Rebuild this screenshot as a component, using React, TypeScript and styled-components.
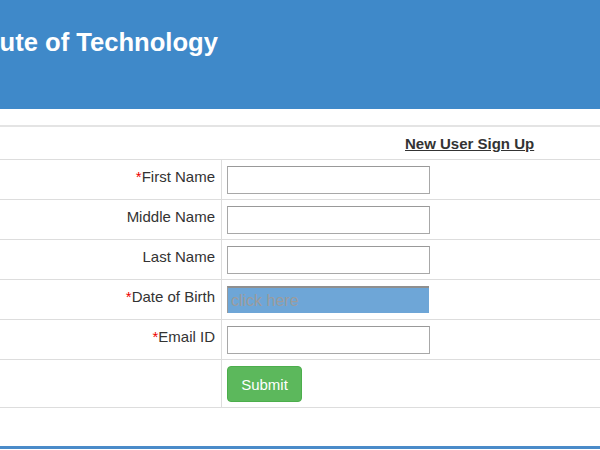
import styled, { createGlobalStyle } from "styled-components";

const GlobalStyle = createGlobalStyle`
  html, body {
    margin: 0;
    padding: 0;
    background: #fff;
    overflow: hidden;
  }
  body {
    font-family: "Liberation Sans", Arial, Helvetica, sans-serif;
    color: #333;
  }
`;

const Page = styled.div`
  width: 600px;
  height: 450px;
  overflow: hidden;
`;

const Banner = styled.header`
  height: 109px;
  background-color: #3f89c9;
  padding-top: 27px;
  box-sizing: border-box;
`;

const TitleBox = styled.div`
  width: 218px;
  display: flex;
  justify-content: flex-end;
  white-space: nowrap;
`;

const Title = styled.h1`
  margin: 0;
  font-size: 25.6px;
  line-height: 30px;
  font-weight: bold;
  color: #fff;
`;

const FormTable = styled.section`
  margin-top: 16px;
  border-top: 2px solid #e4e4e4;
`;

const HeadRow = styled.div`
  height: 32px;
  display: flex;
  align-items: center;
  padding-left: 405px;
  border-bottom: 1px solid #ddd;
`;

const SignUpLink = styled.a`
  font-size: 15px;
  font-weight: bold;
  color: #333;
  text-decoration: underline;
  cursor: pointer;
`;

const Row = styled.div<{ $tall?: boolean }>`
  display: grid;
  grid-template-columns: 222px 1fr;
  height: ${(p) => (p.$tall ? "48px" : "40px")};
  box-sizing: border-box;
  border-bottom: 1px solid #ddd;
`;

const LabelCell = styled.div`
  border-right: 1px solid #ddd;
  padding: 6px 6px 0 0;
  text-align: right;
  font-size: 15px;
  line-height: 21px;
`;

const Star = styled.span`
  color: #e00;
`;

const FieldCell = styled.div`
  padding: 6px 0 0 5px;
`;

const TextInput = styled.input`
  display: block;
  width: 203px;
  height: 28px;
  box-sizing: border-box;
  border: 1px solid #a8a8a8;
  border-top-color: #999;
  background: #fff;
  font-family: inherit;
  font-size: 15px;
  padding: 2px 4px;
  outline: none;
`;

const DateInput = styled(TextInput)`
  width: 202px;
  height: 27px;
  background: #6ea6d7;
  border: none;
  border-top: 2px solid #8f8f8f;
  border-left: 1px solid #9a9a9a;
  padding: 0 3px;
  font-size: 16px;
  &::placeholder {
    color: #9c9c9c;
  }
`;

const SubmitButton = styled.button`
  display: block;
  width: 75px;
  height: 36px;
  border: 1px solid #4cae4c;
  border-radius: 4px;
  background-color: #5cb85c;
  color: #fff;
  font-family: inherit;
  font-size: 15px;
  cursor: pointer;
`;

const Footer = styled.footer`
  margin-top: 38px;
  border-top: 3px solid #4a8bc9;
  height: 10px;
`;

const fields = [
  { label: "First Name", required: true },
  { label: "Middle Name", required: false },
  { label: "Last Name", required: false },
  { label: "Date of Birth", required: true, date: true },
  { label: "Email ID", required: true },
];

export default function App() {
  return (
    <Page>
      <GlobalStyle />
      <Banner>
        <TitleBox>
          <Title>Global Institute of Technology</Title>
        </TitleBox>
      </Banner>
      <FormTable>
        <HeadRow>
          <SignUpLink>New User Sign Up</SignUpLink>
        </HeadRow>
        {fields.map((f) => (
          <Row key={f.label}>
            <LabelCell>
              {f.required && <Star>*</Star>}
              {f.label}
            </LabelCell>
            <FieldCell>
              {f.date ? (
                <DateInput type="text" placeholder="click here" readOnly />
              ) : (
                <TextInput type="text" />
              )}
            </FieldCell>
          </Row>
        ))}
        <Row $tall>
          <LabelCell />
          <FieldCell>
            <SubmitButton type="submit">Submit</SubmitButton>
          </FieldCell>
        </Row>
      </FormTable>
      <Footer />
    </Page>
  );
}
